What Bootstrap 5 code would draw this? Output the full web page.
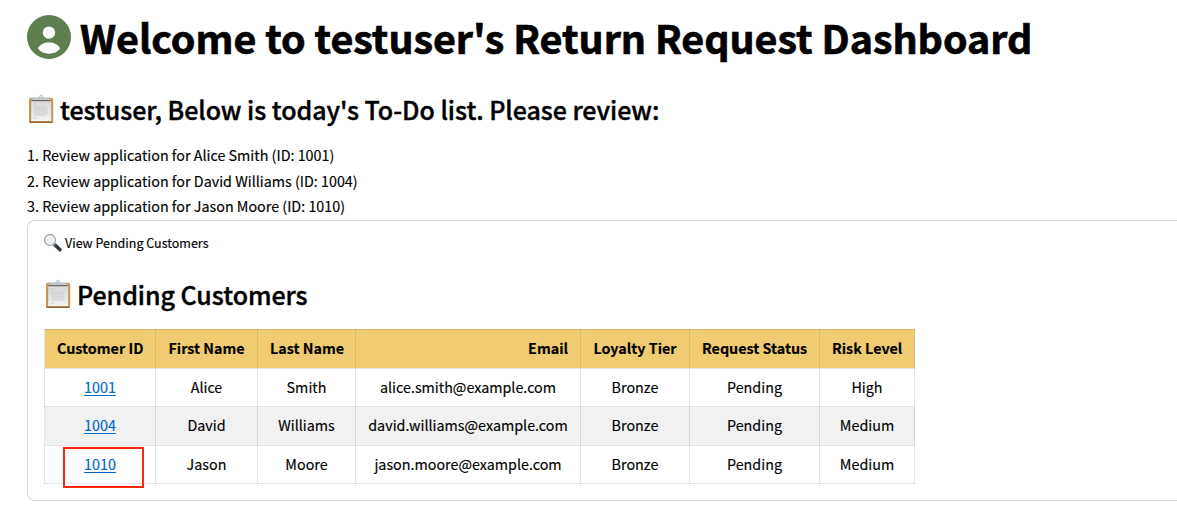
<!DOCTYPE html>
<html lang="en">
<head>
<meta charset="utf-8">
<meta name="viewport" content="width=device-width, initial-scale=1">
<title>Return Request Dashboard</title>
<link href="https://cdn.jsdelivr.net/npm/bootstrap@5.3.0/dist/css/bootstrap.min.css" rel="stylesheet">
<style>
body{font-family:"Source Sans Pro","Noto Sans CJK SC",sans-serif;font-size:14.32px;color:#000;background:#fff;overflow:hidden;-webkit-text-stroke:.15px currentColor}
.dash{padding:10px 0 0 27px}
h1{font-size:39.4px;font-weight:700;line-height:56px;height:56px;-webkit-text-stroke:.7px #000}
h1 svg{width:44px;height:44px;margin-right:9px;margin-top:-2px}
h1 span{margin-top:-2px;letter-spacing:-.02px}
h2{font-size:25px;font-weight:500;line-height:34px;height:34px;letter-spacing:-.05px;-webkit-text-stroke:.4px #000}
h2 span{margin-top:-3px}
.dash>h2{margin-top:28px}
.dash>h2 span{margin-top:-5px}
.clip{width:28px;height:30px;margin-right:5px;margin-top:-4px}
.todo{margin-top:14px;margin-bottom:1px;line-height:25.6px}
.panel{border:1px solid #d5d6d8;border-right:0;border-radius:8px 0 0 8px;height:281px;padding:12px 0 0 16px}
.panel-head{font-size:12.5px;line-height:21px;height:21px}
.panel-head svg{width:19px;height:19px;margin:-2px 3px 0 -1px}
.panel-head span{margin-top:-2px}
.panel h2{margin-top:25px}
.grid{width:871px;table-layout:fixed;border-collapse:collapse;margin-top:16px;text-align:center}
.grid th,.grid td{border:1px solid rgba(49,51,63,.12);padding:0 12px 2px;line-height:20px;white-space:nowrap;vertical-align:middle}
.grid tr{height:38.5px}
.grid thead tr{height:39px}
.grid th{background:#f0cb72;font-weight:700}
.grid tbody tr:nth-child(even){background:#f1f1f1}
.grid a{color:#0068c9;text-decoration:underline;text-underline-offset:2px;text-decoration-thickness:1px}
.marker{position:absolute;left:50%;top:50%;width:81px;height:41px;margin:-18px 0 0 -37px;border:2px solid #f7280b;pointer-events:none}
</style>
</head>
<body>
<svg width="0" height="0" class="position-absolute" aria-hidden="true">
  <defs>
    <linearGradient id="paper" x2="0" y2="1"><stop stop-color="#d6d6d6"/><stop offset="1" stop-color="#f1f1f1"/></linearGradient>
    <symbol id="clipboard" viewBox="0 0 28 30">
      <rect x="2" y="3.7" width="24.2" height="25.3" rx="1.8" fill="#c69352"/>
      <path d="M2.5 28.2h23" stroke="#8c5a31" stroke-width="1.3"/>
      <path d="M4.2 5.2h20v21.6h-20z" fill="url(#paper)"/>
      <path d="M4.2 26.6h20" stroke="#fff" stroke-width=".8"/>
      <path d="M7 10h3M7 13h13M7 15h14M7 17h13M7 19h14M7 21h12M7 24h3" stroke="#c7c7c7" stroke-width=".8"/>
      <path d="M4.2 6.6h20" stroke="#74685f" stroke-width="1.2"/>
      <path d="M6 6V4.5q0-.9 1-.9h3.7q1.3 0 1.6-1.5a1.8 1.8 0 0 1 3.5 0q.3 1.5 1.6 1.5H21q1 0 1 .9V6z" fill="#bdc8d1"/>
      <circle cx="14" cy="2.5" r=".7" fill="#fff"/>
    </symbol>
  </defs>
</svg>
<main class="dash">
  <h1 class="d-flex align-items-center text-nowrap m-0">
    <svg viewBox="0 0 44 44" aria-hidden="true"><circle cx="22" cy="22" r="22" fill="#5f7f50"/><circle cx="22" cy="17.6" r="6.2" fill="#fff"/><path d="M10.8 33.6C13 29.4 17.2 27.6 22 27.6s9 1.8 11.2 6C30.5 37 26.6 38.8 22 38.8s-8.5-1.8-11.2-5.2z" fill="#fff"/></svg>
    <span>Welcome to testuser's Return Request Dashboard</span>
  </h1>
  <h2 class="d-flex align-items-center text-nowrap mb-0"><svg class="clip"><use href="#clipboard"/></svg><span>testuser, Below is today's To-Do list. Please review:</span></h2>
  <div class="todo">
    <div>1. Review application for Alice Smith (ID: 1001)</div>
    <div>2. Review application for David Williams (ID: 1004)</div>
    <div>3. Review application for Jason Moore (ID: 1010)</div>
  </div>
  <section class="panel">
    <div class="panel-head d-flex align-items-center">
      <svg viewBox="0 0 19 19" aria-hidden="true"><path d="m12 12 5 4.8" stroke="#30343a" stroke-width="3.3" stroke-linecap="round"/><path d="m10.5 10.5 2 2" stroke="#777" stroke-width="1.5"/><circle cx="7" cy="7" r="5.5" fill="#edf2f5" stroke="#a5a9ac" stroke-width="1.3"/><path d="M3.5 6.5Q4.5 3.5 7.5 3.3" stroke="#fff" fill="none"/></svg>
      <span>View Pending Customers</span>
    </div>
    <h2 class="d-flex align-items-center mb-0"><svg class="clip"><use href="#clipboard"/></svg><span>Pending Customers</span></h2>
    <table class="grid">
      <colgroup><col width="111"><col width="102"><col width="98"><col width="225"><col width="109"><col width="130"><col width="95"></colgroup>
      <thead><tr><th>Customer ID</th><th>First Name</th><th>Last Name</th><th class="text-end">Email</th><th>Loyalty Tier</th><th>Request Status</th><th>Risk Level</th></tr></thead>
      <tbody>
        <tr><td><a href="#">1001</a></td><td>Alice</td><td>Smith</td><td>alice.smith@example.com</td><td>Bronze</td><td>Pending</td><td>High</td></tr>
        <tr><td><a href="#">1004</a></td><td>David</td><td>Williams</td><td>david.williams@example.com</td><td>Bronze</td><td>Pending</td><td>Medium</td></tr>
        <tr><td class="position-relative"><a href="#">1010</a><span class="marker"></span></td><td>Jason</td><td>Moore</td><td>jason.moore@example.com</td><td>Bronze</td><td>Pending</td><td>Medium</td></tr>
      </tbody>
    </table>
  </section>
</main>
<script src="https://cdn.jsdelivr.net/npm/bootstrap@5.3.0/dist/js/bootstrap.bundle.min.js"></script>
</body>
</html>
